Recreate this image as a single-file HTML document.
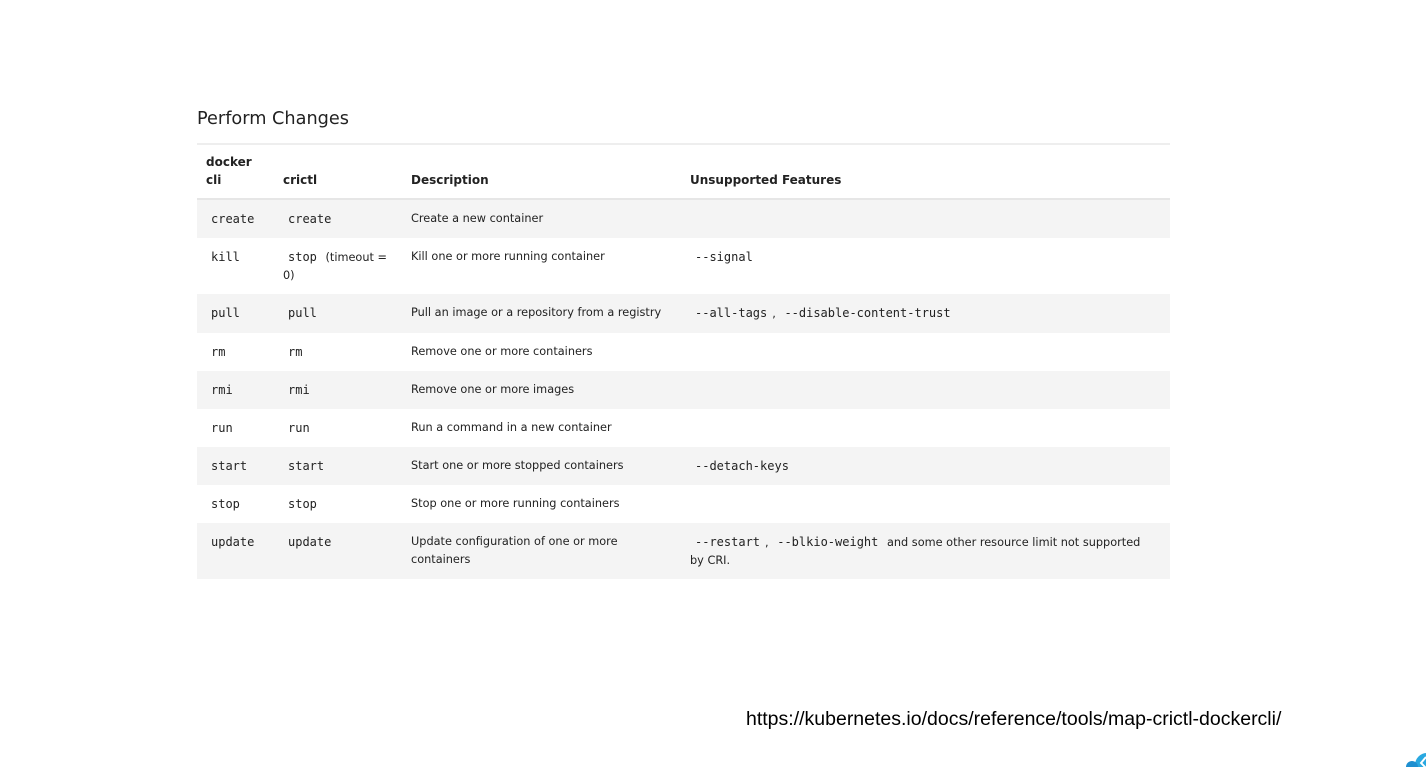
<!DOCTYPE html>
<html><head><style>
body{margin:0;width:1426px;height:767px;background:#fff;position:relative;overflow:hidden;font-family:"DejaVu Sans","Liberation Sans",sans-serif;color:#222}
h2{position:absolute;left:197px;top:109px;margin:0;font-weight:normal;font-size:17.7px;color:#222}
.hr{position:absolute;left:197px;top:143px;width:973px;height:2px;background:#eee}
.row{position:absolute;left:197px;width:973px;font-size:11.3px}
.s{background:#f4f4f4}
.c{position:absolute;line-height:18px}
.t{top:10px}
code{font-family:"DejaVu Sans Mono","Liberation Mono",monospace;font-size:12px;padding:0 5px}
.h{font-weight:bold;font-size:12px}
.url{position:absolute;left:746px;top:708px;font-family:"Liberation Sans",sans-serif;font-size:19.5px;color:#000}
.bd{position:absolute;left:197px;top:198px;width:973px;height:2px;background:#e6e6e6}
</style></head><body>
<h2>Perform Changes</h2>
<div class="hr"></div>
<div class="row" style="top:145px;height:54px">
<div class="c h" style="left:9px;top:8px">docker<br>cli</div>
<div class="c h" style="left:86px;top:26px">crictl</div>
<div class="c h" style="left:214px;top:26px">Description</div>
<div class="c h" style="left:493px;top:26px">Unsupported Features</div>
</div>
<div class="bd"></div>
<div class="row s" style="top:200px;height:38px"><div class="c t" style="left:9px"><code>create</code></div><div class="c t" style="left:86px"><code>create</code></div><div class="c t" style="left:214px">Create a new container</div></div>
<div class="row" style="top:238px;height:56px"><div class="c t" style="left:9px"><code>kill</code></div><div class="c t" style="left:86px;width:112px"><code>stop</code> (timeout = 0)</div><div class="c t" style="left:214px">Kill one or more running container</div><div class="c t" style="left:493px"><code>--signal</code></div></div>
<div class="row s" style="top:294px;height:39px"><div class="c t" style="left:9px"><code>pull</code></div><div class="c t" style="left:86px"><code>pull</code></div><div class="c t" style="left:214px">Pull an image or a repository from a registry</div><div class="c t" style="left:493px"><code>--all-tags</code>, <code>--disable-content-trust</code></div></div>
<div class="row" style="top:333px;height:38px"><div class="c t" style="left:9px"><code>rm</code></div><div class="c t" style="left:86px"><code>rm</code></div><div class="c t" style="left:214px">Remove one or more containers</div></div>
<div class="row s" style="top:371px;height:38px"><div class="c t" style="left:9px"><code>rmi</code></div><div class="c t" style="left:86px"><code>rmi</code></div><div class="c t" style="left:214px">Remove one or more images</div></div>
<div class="row" style="top:409px;height:38px"><div class="c t" style="left:9px"><code>run</code></div><div class="c t" style="left:86px"><code>run</code></div><div class="c t" style="left:214px">Run a command in a new container</div></div>
<div class="row s" style="top:447px;height:38px"><div class="c t" style="left:9px"><code>start</code></div><div class="c t" style="left:86px"><code>start</code></div><div class="c t" style="left:214px">Start one or more stopped containers</div><div class="c t" style="left:493px"><code>--detach-keys</code></div></div>
<div class="row" style="top:485px;height:38px"><div class="c t" style="left:9px"><code>stop</code></div><div class="c t" style="left:86px"><code>stop</code></div><div class="c t" style="left:214px">Stop one or more running containers</div></div>
<div class="row s" style="top:523px;height:56px"><div class="c t" style="left:9px"><code>update</code></div><div class="c t" style="left:86px"><code>update</code></div><div class="c t" style="left:214px;width:250px">Update configuration of one or more containers</div><div class="c t" style="left:493px;width:462px"><code>--restart</code>, <code>--blkio-weight</code> and some other resource limit not supported by CRI.</div></div>
<div class="url">https://kubernetes.io/docs/reference/tools/map-crictl-dockercli/</div>
<svg style="position:absolute;left:1400px;top:740px" width="26" height="27"><circle cx="27" cy="25" r="12" fill="#29a8e0"/><circle cx="12" cy="27" r="6" fill="#1e8fd0"/><path d="M26 17 L21 23 L26 28" stroke="#fff" stroke-width="2" fill="none"/></svg>
</body></html>
